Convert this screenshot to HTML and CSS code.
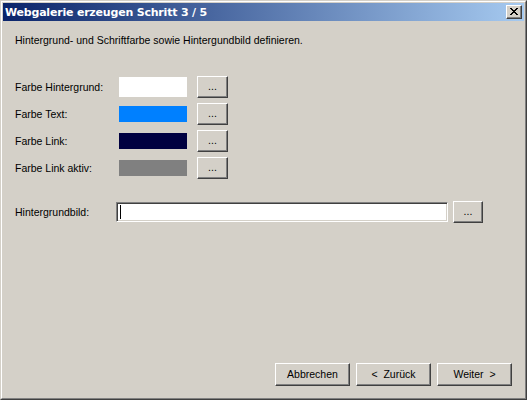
FILE: index.html
```html
<!DOCTYPE html>
<html lang="de">
<head>
<meta charset="utf-8">
<title>Webgalerie erzeugen Schritt 3 / 5</title>
<link rel="stylesheet" href="styles.css">
</head>
<body>
<div class="window">
  <div class="frame">
    <div class="titlebar">
      <span class="title">Webgalerie erzeugen Schritt 3 / 5</span>
      <span class="close">
        <svg width="8" height="7" viewBox="0 0 8 7" shape-rendering="crispEdges">
          <path d="M0 0h2v1H0zM6 0h2v1H6zM1 1h2v1H1zM5 1h2v1H5zM2 2h4v1H2zM3 3h2v1H3zM2 4h4v1H2zM1 5h2v1H1zM5 5h2v1H5zM0 6h2v1H0zM6 6h2v1H6z" fill="#000"/>
        </svg>
      </span>
    </div>
    <div class="content">
      <p class="intro">Hintergrund- und Schriftfarbe sowie Hintergundbild definieren.</p>
      <div class="colors">
        <div class="row">
          <span class="label">Farbe Hintergrund:</span>
          <span class="swatch swatch-big sw-white"></span>
          <span class="btn btn-dots">...</span>
        </div>
        <div class="row">
          <span class="label">Farbe Text:</span>
          <span class="swatch sw-blue"></span>
          <span class="btn btn-dots">...</span>
        </div>
        <div class="row">
          <span class="label">Farbe Link:</span>
          <span class="swatch sw-navy"></span>
          <span class="btn btn-dots">...</span>
        </div>
        <div class="row">
          <span class="label">Farbe Link aktiv:</span>
          <span class="swatch sw-gray"></span>
          <span class="btn btn-dots">...</span>
        </div>
      </div>
      <div class="row row-file">
        <span class="label label-file">Hintergrundbild:</span>
        <span class="input"><span class="caret"></span></span>
        <span class="btn btn-dots">...</span>
      </div>
      <div class="spacer"></div>
      <div class="footer">
        <span class="btn btn-wide">Abbrechen</span>
        <span class="btn btn-wide">&lt;&nbsp; Zurück</span>
        <span class="btn btn-wide">Weiter &nbsp;&gt;</span>
      </div>
    </div>
  </div>
</div>
</body>
</html>
```
FILE: styles.css
```css
html, body {
  margin: 0;
  padding: 0;
  background: #d4d0c8;
}
.window {
  width: 527px;
  height: 400px;
  box-sizing: border-box;
  border: 1px solid;
  border-color: #d4d0c8 #404040 #404040 #d4d0c8;
  font-family: "Liberation Sans", Arial, sans-serif;
  font-size: 10.5px;
  color: #000;
}
.frame {
  height: 100%;
  box-sizing: border-box;
  border: 1px solid;
  border-color: #ffffff #808080 #808080 #ffffff;
  padding: 1px;
  display: flex;
  flex-direction: column;
}
.titlebar {
  height: 18px;
  flex: none;
  display: flex;
  align-items: center;
  justify-content: space-between;
  padding-left: 2px;
  padding-right: 2px;
  background: linear-gradient(to right, #0a246a, #a6caf0);
}
.title {
  color: #fff;
  font-family: "DejaVu Sans", Verdana, sans-serif;
  font-weight: bold;
  font-size: 11px;
  letter-spacing: -0.2px;
}
.close {
  width: 16px;
  height: 14px;
  box-sizing: border-box;
  background: #d4d0c8;
  border: 1px solid;
  border-color: #fff #404040 #404040 #fff;
  box-shadow: inset -1px -1px 0 #808080;
  display: flex;
  align-items: center;
  justify-content: center;
  padding: 0 1px 1px 0;
}
.close svg { display: block; }
.content {
  flex: 1;
  display: flex;
  flex-direction: column;
  padding: 13px 12px 11px 12px;
}
.intro {
  margin: 0;
  line-height: 13px;
}
.colors {
  margin-top: 29px;
  display: flex;
  flex-direction: column;
  gap: 5px;
}
.row {
  display: flex;
  align-items: center;
  height: 22px;
}
.label {
  width: 104px;
  flex: none;
}
.swatch {
  width: 68px;
  height: 16px;
  margin-right: 10px;
}
.swatch-big { height: 20px; }
.sw-white { background: #ffffff; }
.sw-blue { background: #0080ff; }
.sw-navy { background: #000040; }
.sw-gray { background: #808080; }
.btn {
  box-sizing: border-box;
  background: #d4d0c8;
  border: 1px solid;
  border-color: #fff #404040 #404040 #fff;
  box-shadow: inset -1px -1px 0 #808080;
  display: flex;
  align-items: center;
  justify-content: center;
}
.btn-dots {
  width: 31px;
  height: 22px;
  padding-bottom: 2px;
}
.row-file {
  margin-top: 22px;
}
.label-file { width: 101px; }
.input {
  width: 332px;
  height: 20px;
  box-sizing: border-box;
  background: #fff;
  border: 1px solid;
  border-color: #808080 #ffffff #ffffff #808080;
  box-shadow: inset 1px 1px 0 #404040, inset -1px -1px 0 #d4d0c8;
  margin-right: 5px;
  display: flex;
  align-items: center;
  padding-left: 3px;
}
.caret {
  width: 1px;
  height: 14px;
  background: #000;
}
.row-file .btn-dots { width: 30px; }
.spacer { flex: 1; }
.footer {
  display: flex;
  justify-content: flex-end;
  gap: 6px;
}
.btn-wide {
  width: 75px;
  height: 23px;
  padding-bottom: 1px;
}
```
